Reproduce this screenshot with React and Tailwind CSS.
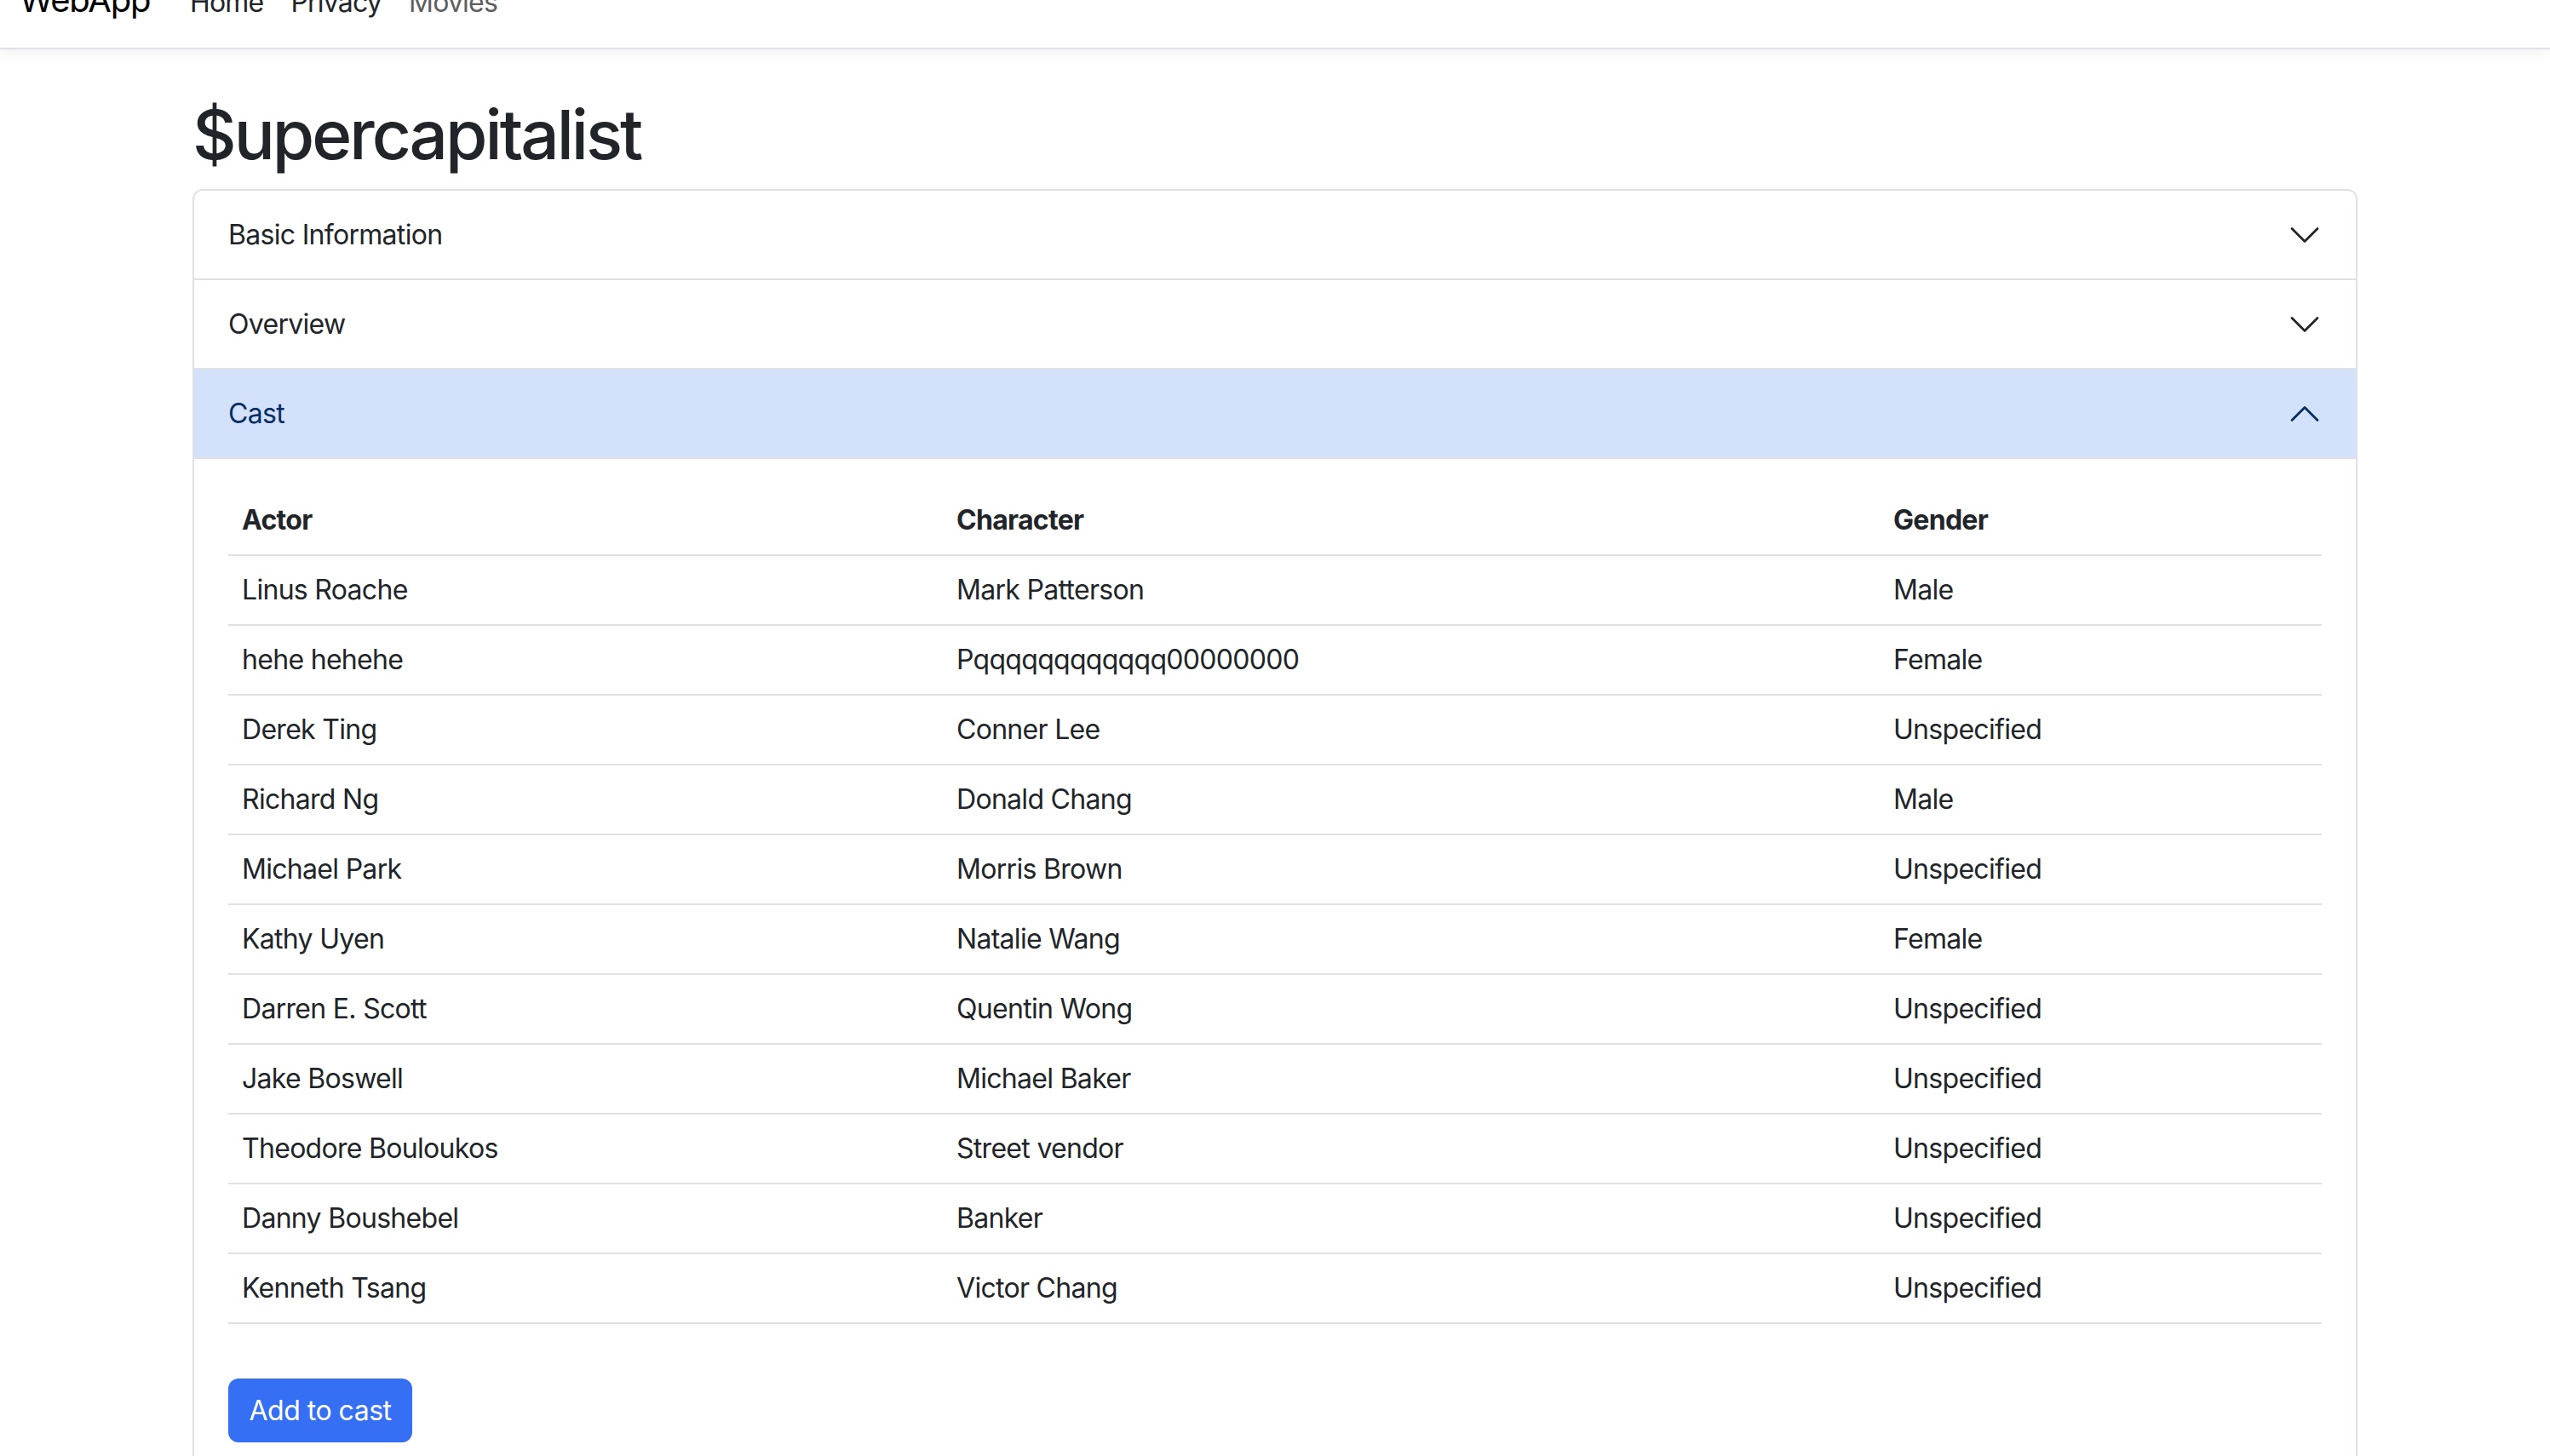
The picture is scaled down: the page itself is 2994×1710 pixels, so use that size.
import React from "react";

const cast = [
  ["Linus Roache", "Mark Patterson", "Male"],
  ["hehe hehehe", "Pqqqqqqqqqqqq00000000", "Female"],
  ["Derek Ting", "Conner Lee", "Unspecified"],
  ["Richard Ng", "Donald Chang", "Male"],
  ["Michael Park", "Morris Brown", "Unspecified"],
  ["Kathy Uyen", "Natalie Wang", "Female"],
  ["Darren E. Scott", "Quentin Wong", "Unspecified"],
  ["Jake Boswell", "Michael Baker", "Unspecified"],
  ["Theodore Bouloukos", "Street vendor", "Unspecified"],
  ["Danny Boushebel", "Banker", "Unspecified"],
  ["Kenneth Tsang", "Victor Chang", "Unspecified"],
];

function Chevron({ up, color }) {
  return (
    <svg
      viewBox="0 0 16 16"
      className={up ? "w-[40px] h-[40px] rotate-180" : "w-[40px] h-[40px]"}
      fill="none"
      stroke={color}
      strokeWidth="1.1"
      strokeLinecap="round"
      strokeLinejoin="round"
    >
      <path d="M2 5L8 11L14 5" />
    </svg>
  );
}

function Header({ title, active }) {
  return (
    <div
      className={
        active
          ? "h-[105px] flex items-center justify-between px-[40px] bg-[#d3e2fa] text-[#052c65] border-b-2 border-[#dee2e6]"
          : "h-[105px] flex items-center justify-between px-[40px] bg-white text-[#212529] border-b-2 border-[#dee2e6]"
      }
    >
      <span className="text-[32px] leading-[48px] tracking-[-0.7px]">{title}</span>
      <Chevron up={active} color={active ? "#052c65" : "#212529"} />
    </div>
  );
}

export default function App() {
  return (
    <div
      className="min-h-screen bg-white text-[#212529]"
      style={{ fontFamily: "Inter, 'Noto Sans', sans-serif" }}
    >
      <nav className="h-[58px] overflow-hidden bg-white border-b-2 border-[#dee2e6] shadow-[0_6px_16px_rgba(0,0,0,0.05)] relative z-10">
        <div className="flex items-baseline mt-[-30px] pl-[23px]">
          <span className="w-[184px] text-[40px] leading-[60px] tracking-[-1.2px] text-black">WebApp</span>
          <span className="px-[16px] text-[32px] leading-[60px] tracking-[-0.8px] text-[#212529]">Home</span>
          <span className="px-[16px] text-[32px] leading-[60px] tracking-[-0.8px] text-[#212529]">Privacy</span>
          <span className="px-[16px] text-[32px] leading-[60px] tracking-[-0.8px] text-[#5e5e5e]">Movies</span>
        </div>
      </nav>

      <main className="w-[2542px] mx-auto">
        <h1 className="mt-[52px] mb-[16px] text-[80px] leading-[96px] font-medium tracking-[-3px] text-[#212529]">
          $upercapitalist
        </h1>

        <div className="border-2 border-[#dee2e6] rounded-[12px] overflow-hidden">
          <Header title="Basic Information" />
          <Header title="Overview" />
          <Header title="Cast" active />
          <div className="px-[40px] pt-[32px] pb-[32px]">
            <div className="grid grid-cols-[839px_1100px_1fr] text-[32px] tracking-[-0.7px]">
              {["Actor", "Character", "Gender"].map((h) => (
                <div
                  key={h}
                  className="h-[82px] flex items-center pl-[16px] font-bold border-b-2 border-[#dee2e6]"
                >
                  {h}
                </div>
              ))}
              {cast.map((row, i) =>
                row.map((c, j) => (
                  <div
                    key={i + "-" + j}
                    className="h-[82px] flex items-center pl-[16px] border-b-2 border-[#dee2e6]"
                  >
                    {c}
                  </div>
                ))
              )}
            </div>
            <button className="mt-[64px] h-[75px] w-[216px] rounded-[12px] bg-[#356ff3] text-white text-[32px] tracking-[-0.5px] flex items-center justify-center">
              Add to cast
            </button>
          </div>
        </div>
      </main>
    </div>
  );
}
